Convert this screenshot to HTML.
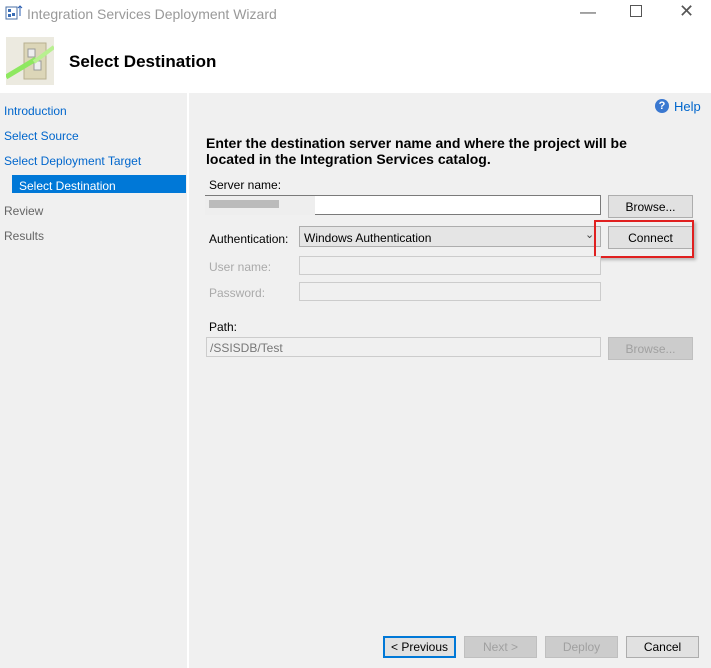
<!DOCTYPE html>
<html><head><style>
body{margin:0;width:711px;height:668px;background:#fff;font-family:"Liberation Sans",sans-serif;font-size:12px;position:relative;overflow:hidden}
.a{position:absolute}
.btn{position:absolute;background:#e1e1e1;border:1px solid #adadad;box-sizing:border-box;text-align:center;color:#000;font-size:12px}
.dis{background:#ccc;border-color:#bfbfbf;color:#a0a0a0}
.in{position:absolute;box-sizing:border-box;border:1px solid #ccc;background:#f0f0f0}
.nav{position:absolute;left:4px;color:#0066cc;font-size:12px}
</style></head><body>
<svg class="a" style="left:5px;top:4px" width="18" height="16"><rect x="1" y="3" width="11" height="12" fill="#fff" stroke="#4a6fa5"/><rect x="3" y="5" width="3" height="3" fill="#3a6db5"/><rect x="7" y="9" width="3" height="3" fill="#3a6db5"/><rect x="3" y="10" width="3" height="3" fill="#3a6db5"/><path d="M15 12V2M13 4l2-2 2 2" stroke="#2a5db0" fill="none"/></svg>
<div class="a" style="left:27px;top:6px;color:#999;font-size:14px">Integration Services Deployment Wizard</div>
<div class="a" style="left:580px;top:4px;color:#555;font-size:16px">&#8212;</div>
<div class="a" style="left:630px;top:5px;width:10px;height:10px;border:1px solid #555"></div>
<div class="a" style="left:679px;top:1px;color:#555;font-size:18px">&#x2715;</div>
<svg class="a" style="left:6px;top:37px" width="48" height="48"><rect width="48" height="48" fill="#eceae0"/><rect x="18" y="6" width="22" height="36" fill="#dcd6b8" stroke="#b8b090"/><rect x="22" y="12" width="7" height="8" fill="#eee" stroke="#999"/><rect x="28" y="24" width="7" height="9" fill="#eee" stroke="#999"/><path d="M0 40 L30 22" stroke="#8ee860" stroke-width="5"/><path d="M28 25 L48 10" stroke="#b8f090" stroke-width="4"/></svg>
<div class="a" style="left:69px;top:52px;font-size:17px;font-weight:bold">Select Destination</div>
<div class="a" style="left:0;top:93px;width:187px;height:575px;background:#f0f0f0"></div>
<div class="a" style="left:189px;top:93px;width:522px;height:575px;background:#f0f0f0"></div>
<div class="nav" style="top:104px">Introduction</div>
<div class="nav" style="top:129px">Select Source</div>
<div class="nav" style="top:154px">Select Deployment Target</div>
<div class="a" style="left:12px;top:175px;width:174px;height:18px;background:#0078d7"></div>
<div class="a" style="left:19px;top:179px;color:#fff">Select Destination</div>
<div class="nav" style="top:204px;color:#666">Review</div>
<div class="nav" style="top:229px;color:#666">Results</div>
<div class="a" style="left:655px;top:99px;width:14px;height:14px;border-radius:50%;background:#3a78d0;color:#fff;font-size:11px;font-weight:bold;text-align:center;line-height:14px">?</div>
<div class="a" style="left:674px;top:99px;color:#0066cc;font-size:13px">Help</div>
<div class="a" style="left:206px;top:135px;font-size:14px;font-weight:bold;line-height:16px;width:460px">Enter the destination server name and where the project will be located in the Integration Services catalog.</div>
<div class="a" style="left:209px;top:178px">Server name:</div>
<div class="a" style="left:205px;top:195px;width:396px;height:20px;background:#fff;border:1px solid #7a7a7a;box-sizing:border-box"></div>
<div class="a" style="left:205px;top:196px;width:110px;height:19px;background:#eee"></div>
<div class="a" style="left:209px;top:200px;width:70px;height:8px;background:#bbb"></div>
<div class="btn" style="left:608px;top:195px;width:85px;height:23px;line-height:22px">Browse...</div>
<div class="a" style="left:209px;top:232px">Authentication:</div>
<div class="a" style="left:299px;top:226px;width:302px;height:21px;background:#e5e5e5;border:1px solid #adadad;box-sizing:border-box;padding:4px 0 0 4px">Windows Authentication</div>
<div class="a" style="left:585px;top:228px;color:#444;font-size:11px">&#8964;</div>
<div class="btn" style="left:608px;top:226px;width:85px;height:23px;line-height:22px">Connect</div>
<div class="a" style="left:594px;top:220px;width:100px;height:38px;border:2px solid #e02020;box-sizing:border-box;box-shadow:2px 2px 3px rgba(0,0,0,.25)"></div>
<div class="a" style="left:209px;top:260px;color:#aaa">User name:</div>
<div class="in" style="left:299px;top:256px;width:302px;height:19px"></div>
<div class="a" style="left:209px;top:286px;color:#aaa">Password:</div>
<div class="in" style="left:299px;top:282px;width:302px;height:19px"></div>
<div class="a" style="left:209px;top:320px">Path:</div>
<div class="in" style="left:206px;top:337px;width:395px;height:20px;color:#777;padding:3px 0 0 3px">/SSISDB/Test</div>
<div class="btn dis" style="left:608px;top:337px;width:85px;height:23px;line-height:22px">Browse...</div>
<div class="btn" style="left:383px;top:636px;width:73px;height:22px;line-height:19px;border:2px solid #0078d7">&lt; Previous</div>
<div class="btn dis" style="left:464px;top:636px;width:73px;height:22px;line-height:20px">Next &gt;</div>
<div class="btn dis" style="left:545px;top:636px;width:73px;height:22px;line-height:20px">Deploy</div>
<div class="btn" style="left:626px;top:636px;width:73px;height:22px;line-height:20px">Cancel</div>
</body></html>
